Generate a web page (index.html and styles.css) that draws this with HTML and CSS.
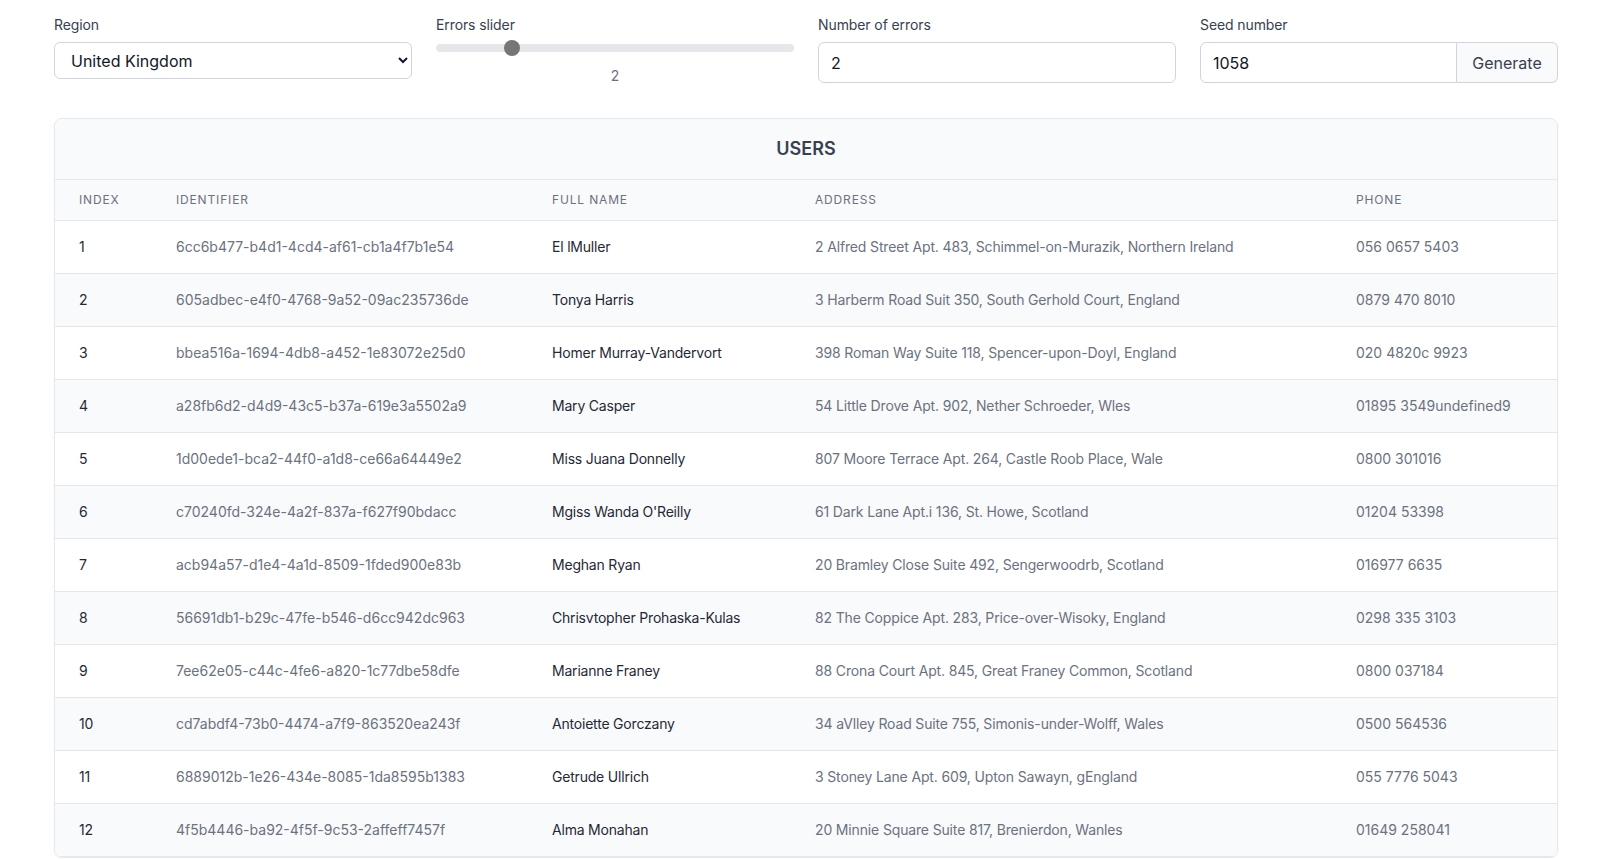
FILE: index.html
```html
<!DOCTYPE html>
<html lang="en">
<head>
<meta charset="utf-8">
<title>Users</title>
<link rel="stylesheet" href="styles.css">
</head>
<body>
<div class="page">
  <div class="controls">
    <div class="field">
      <label class="label" for="region">Region</label>
      <select id="region" class="select">
        <option>United Kingdom</option>
        <option>United States</option>
        <option>Germany</option>
      </select>
    </div>
    <div class="field">
      <label class="label" for="slider">Errors slider</label>
      <input id="slider" class="range" type="range" min="0" max="10" step="0.25" value="2">
      <div class="range-value">2</div>
    </div>
    <div class="field">
      <label class="label" for="errors">Number of errors</label>
      <input id="errors" class="input" type="text" value="2">
    </div>
    <div class="field">
      <label class="label" for="seed">Seed number</label>
      <div class="group">
        <input id="seed" class="input group-input" type="text" value="1058">
        <button class="btn" type="button">Generate</button>
      </div>
    </div>
  </div>

  <div class="card">
    <div class="card-title">USERS</div>
    <table class="table">
      <colgroup>
        <col class="c-index">
        <col class="c-id">
        <col class="c-name">
        <col class="c-addr">
        <col class="c-phone">
      </colgroup>
      <thead>
        <tr><th>Index</th><th>Identifier</th><th>Full name</th><th>Address</th><th>Phone</th></tr>
      </thead>
      <tbody>
        <tr><td class="dark">1</td><td class="id">6cc6b477-b4d1-4cd4-af61-cb1a4f7b1e54</td><td class="dark">El lMuller</td><td>2 Alfred Street Apt. 483, Schimmel-on-Murazik, Northern Ireland</td><td class="id">056 0657 5403</td></tr>
        <tr><td class="dark">2</td><td class="id">605adbec-e4f0-4768-9a52-09ac235736de</td><td class="dark">Tonya Harris</td><td>3 Harberm Road Suit 350, South Gerhold Court, England</td><td class="id">0879 470 8010</td></tr>
        <tr><td class="dark">3</td><td class="id">bbea516a-1694-4db8-a452-1e83072e25d0</td><td class="dark">Homer Murray-Vandervort</td><td>398 Roman Way Suite 118, Spencer-upon-Doyl, England</td><td class="id">020 4820c 9923</td></tr>
        <tr><td class="dark">4</td><td class="id">a28fb6d2-d4d9-43c5-b37a-619e3a5502a9</td><td class="dark">Mary Casper</td><td>54 Little Drove Apt. 902, Nether Schroeder, Wles</td><td class="id">01895 3549undefined9</td></tr>
        <tr><td class="dark">5</td><td class="id">1d00ede1-bca2-44f0-a1d8-ce66a64449e2</td><td class="dark">Miss Juana Donnelly</td><td>807 Moore Terrace Apt. 264, Castle Roob Place, Wale</td><td class="id">0800 301016</td></tr>
        <tr><td class="dark">6</td><td class="id">c70240fd-324e-4a2f-837a-f627f90bdacc</td><td class="dark">Mgiss Wanda O'Reilly</td><td>61 Dark Lane Apt.i 136, St. Howe, Scotland</td><td class="id">01204 53398</td></tr>
        <tr><td class="dark">7</td><td class="id">acb94a57-d1e4-4a1d-8509-1fded900e83b</td><td class="dark">Meghan Ryan</td><td>20 Bramley Close Suite 492, Sengerwoodrb, Scotland</td><td class="id">016977 6635</td></tr>
        <tr><td class="dark">8</td><td class="id">56691db1-b29c-47fe-b546-d6cc942dc963</td><td class="dark">Chrisvtopher Prohaska-Kulas</td><td>82 The Coppice Apt. 283, Price-over-Wisoky, England</td><td class="id">0298 335 3103</td></tr>
        <tr><td class="dark">9</td><td class="id">7ee62e05-c44c-4fe6-a820-1c77dbe58dfe</td><td class="dark">Marianne Franey</td><td>88 Crona Court Apt. 845, Great Franey Common, Scotland</td><td class="id">0800 037184</td></tr>
        <tr><td class="dark">10</td><td class="id">cd7abdf4-73b0-4474-a7f9-863520ea243f</td><td class="dark">Antoiette Gorczany</td><td>34 aVlley Road Suite 755, Simonis-under-Wolff, Wales</td><td class="id">0500 564536</td></tr>
        <tr><td class="dark">11</td><td class="id">6889012b-1e26-434e-8085-1da8595b1383</td><td class="dark">Getrude Ullrich</td><td>3 Stoney Lane Apt. 609, Upton Sawayn, gEngland</td><td class="id">055 7776 5043</td></tr>
        <tr><td class="dark">12</td><td class="id">4f5b4446-ba92-4f5f-9c53-2affeff7457f</td><td class="dark">Alma Monahan</td><td>20 Minnie Square Suite 817, Brenierdon, Wanles</td><td class="id">01649 258041</td></tr>
      </tbody>
    </table>
  </div>
</div>
</body>
</html>
```

FILE: styles.css
```css
* { box-sizing: border-box; }

html, body {
  margin: 0;
  padding: 0;
  background: #ffffff;
  font-family: Inter, "Noto Sans", "Liberation Sans", sans-serif;
  color: #111827;
}

.page {
  padding: 15px 46px 0 54px;
}

.controls {
  display: grid;
  grid-template-columns: repeat(4, 1fr);
  column-gap: 24px;
}

.field {
  display: flex;
  flex-direction: column;
}

.label {
  display: block;
  font-size: 14px;
  line-height: 20px;
  font-weight: 400;
  color: #374151;
  letter-spacing: -0.1px;
  margin-bottom: 7px;
}

.select {
  height: 37px;
  width: 100%;
  font-family: inherit;
  font-size: 16px;
  color: #111827;
  background: #ffffff;
  border: 1px solid #d1d5db;
  border-radius: 6px;
  padding: 0 6px 0 12px;
}

.range {
  -webkit-appearance: none;
  appearance: none;
  width: 100%;
  height: 8px;
  margin: 2px 0 0 0;
  background: #e5e7eb;
  border-radius: 8px;
  outline: none;
}

.range::-webkit-slider-thumb {
  -webkit-appearance: none;
  appearance: none;
  width: 16px;
  height: 16px;
  border-radius: 50%;
  background: #767676;
  border: none;
}

.range-value {
  text-align: center;
  font-size: 14px;
  line-height: 20px;
  color: #6b7280;
  margin-top: 14px;
}

.input {
  height: 41px;
  width: 100%;
  font-family: inherit;
  font-size: 16px;
  color: #111827;
  background: #ffffff;
  border: 1px solid #d1d5db;
  border-radius: 6px;
  padding: 0 12px;
  outline: none;
}

.group {
  display: flex;
}

.group-input {
  flex: 1;
  min-width: 0;
  border-radius: 6px 0 0 6px;
}

.btn {
  height: 41px;
  width: 101px;
  flex: none;
  font-family: inherit;
  font-size: 16px;
  color: #374151;
  background: #f9fafb;
  border: 1px solid #d1d5db;
  border-left: none;
  border-radius: 0 6px 6px 0;
  padding: 0;
}

.card {
  margin-top: 32px;
  border: 1px solid #e5e7eb;
  border-radius: 8px;
  overflow: hidden;
  box-shadow: 0 1px 2px rgba(0, 0, 0, 0.04);
}

.card-title {
  background: #f9fafb;
  text-align: center;
  font-size: 18px;
  line-height: 28px;
  font-weight: 600;
  color: #374151;
  padding: 16px 0;
  border-bottom: 1px solid #e5e7eb;
}

.table {
  width: 100%;
  border-collapse: collapse;
  table-layout: fixed;
}

.c-index { width: 97px; }
.c-id { width: 376px; }
.c-name { width: 263px; }
.c-addr { width: 541px; }
.c-phone { width: 225px; }

.table th {
  background: #f9fafb;
  text-align: left;
  font-size: 12px;
  line-height: 16px;
  font-weight: 400;
  color: #6b7280;
  text-transform: uppercase;
  letter-spacing: 0.07em;
  padding: 12px 24px;
  border-bottom: 1px solid #e5e7eb;
  white-space: nowrap;
}

.table td {
  font-size: 14px;
  line-height: 20px;
  color: #6b7280;
  letter-spacing: -0.15px;
  padding: 16px 24px;
  border-bottom: 1px solid #e5e7eb;
  white-space: nowrap;
}

.table td.id {
  letter-spacing: 0;
}

.table td.dark {
  color: #1f2937;
  letter-spacing: -0.2px;
}

.table tbody tr:nth-child(even) td {
  background: #f9fafb;
}
```
